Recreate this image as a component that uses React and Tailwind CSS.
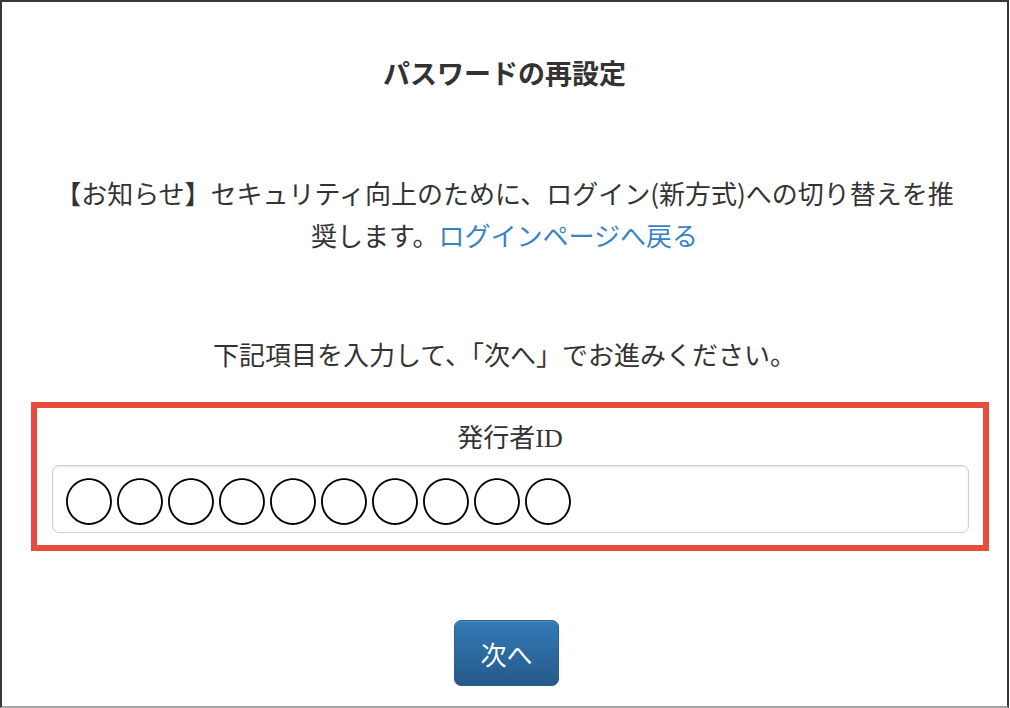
export default function App() {
  const font = { fontFamily: '"Noto Sans CJK JP", "Noto Sans", sans-serif' };

  return (
    <div
      style={font}
      className="w-[1009px] h-[708px] bg-white border-t-2 border-l-2 border-r-2 border-b-2 border-[#383838] border-b-[#a3a3a3] text-[#333] flex flex-col items-center"
    >
      <h1 className="mt-[51px] text-[27px] leading-[40px] font-bold text-[#333]">
        パスワードの再設定
      </h1>

      <p className="mt-[79px] w-[960px] text-center text-[26px] leading-[42px]">
        【お知らせ】セキュリティ向上のために、ログイン(新方式)への切り替えを推
        <br />
        奨します。<a href="#" className="text-[#3a84c4]">ログインページへ戻る</a>
      </p>

      <p className="mt-[77px] text-center text-[26px] leading-[42px]">
        下記項目を入力して、「次へ」でお進みください。
      </p>

      <div className="mt-[27px] ml-[10px] w-[958px] border-[6px] border-[#e74c3c] pt-2 pb-3 pl-[15px] pr-[14px] flex flex-col items-center">
        <label className="text-[26px] leading-[40px]">
          発行者<span style={{ fontFamily: '"Liberation Serif", serif' }}>ID</span>
        </label>
        <div className="mt-[6px] w-full h-[68px] rounded-[7px] border border-[#cfcfcf] shadow-[inset_0_1px_2px_rgba(0,0,0,0.1)] flex items-center pl-[11px]">
          <span className="text-[51px] leading-[60px] text-black">○○○○○○○○○○</span>
        </div>
      </div>

      <button className="mt-[69px] ml-[4px] w-[105px] h-[66px] rounded-[7px] border border-[#2a5f94] bg-gradient-to-b from-[#3479b7] to-[#265a8a] text-white text-[26px] shadow-[inset_0_1px_0_rgba(255,255,255,0.15)]">
        次へ
      </button>
    </div>
  );
}
